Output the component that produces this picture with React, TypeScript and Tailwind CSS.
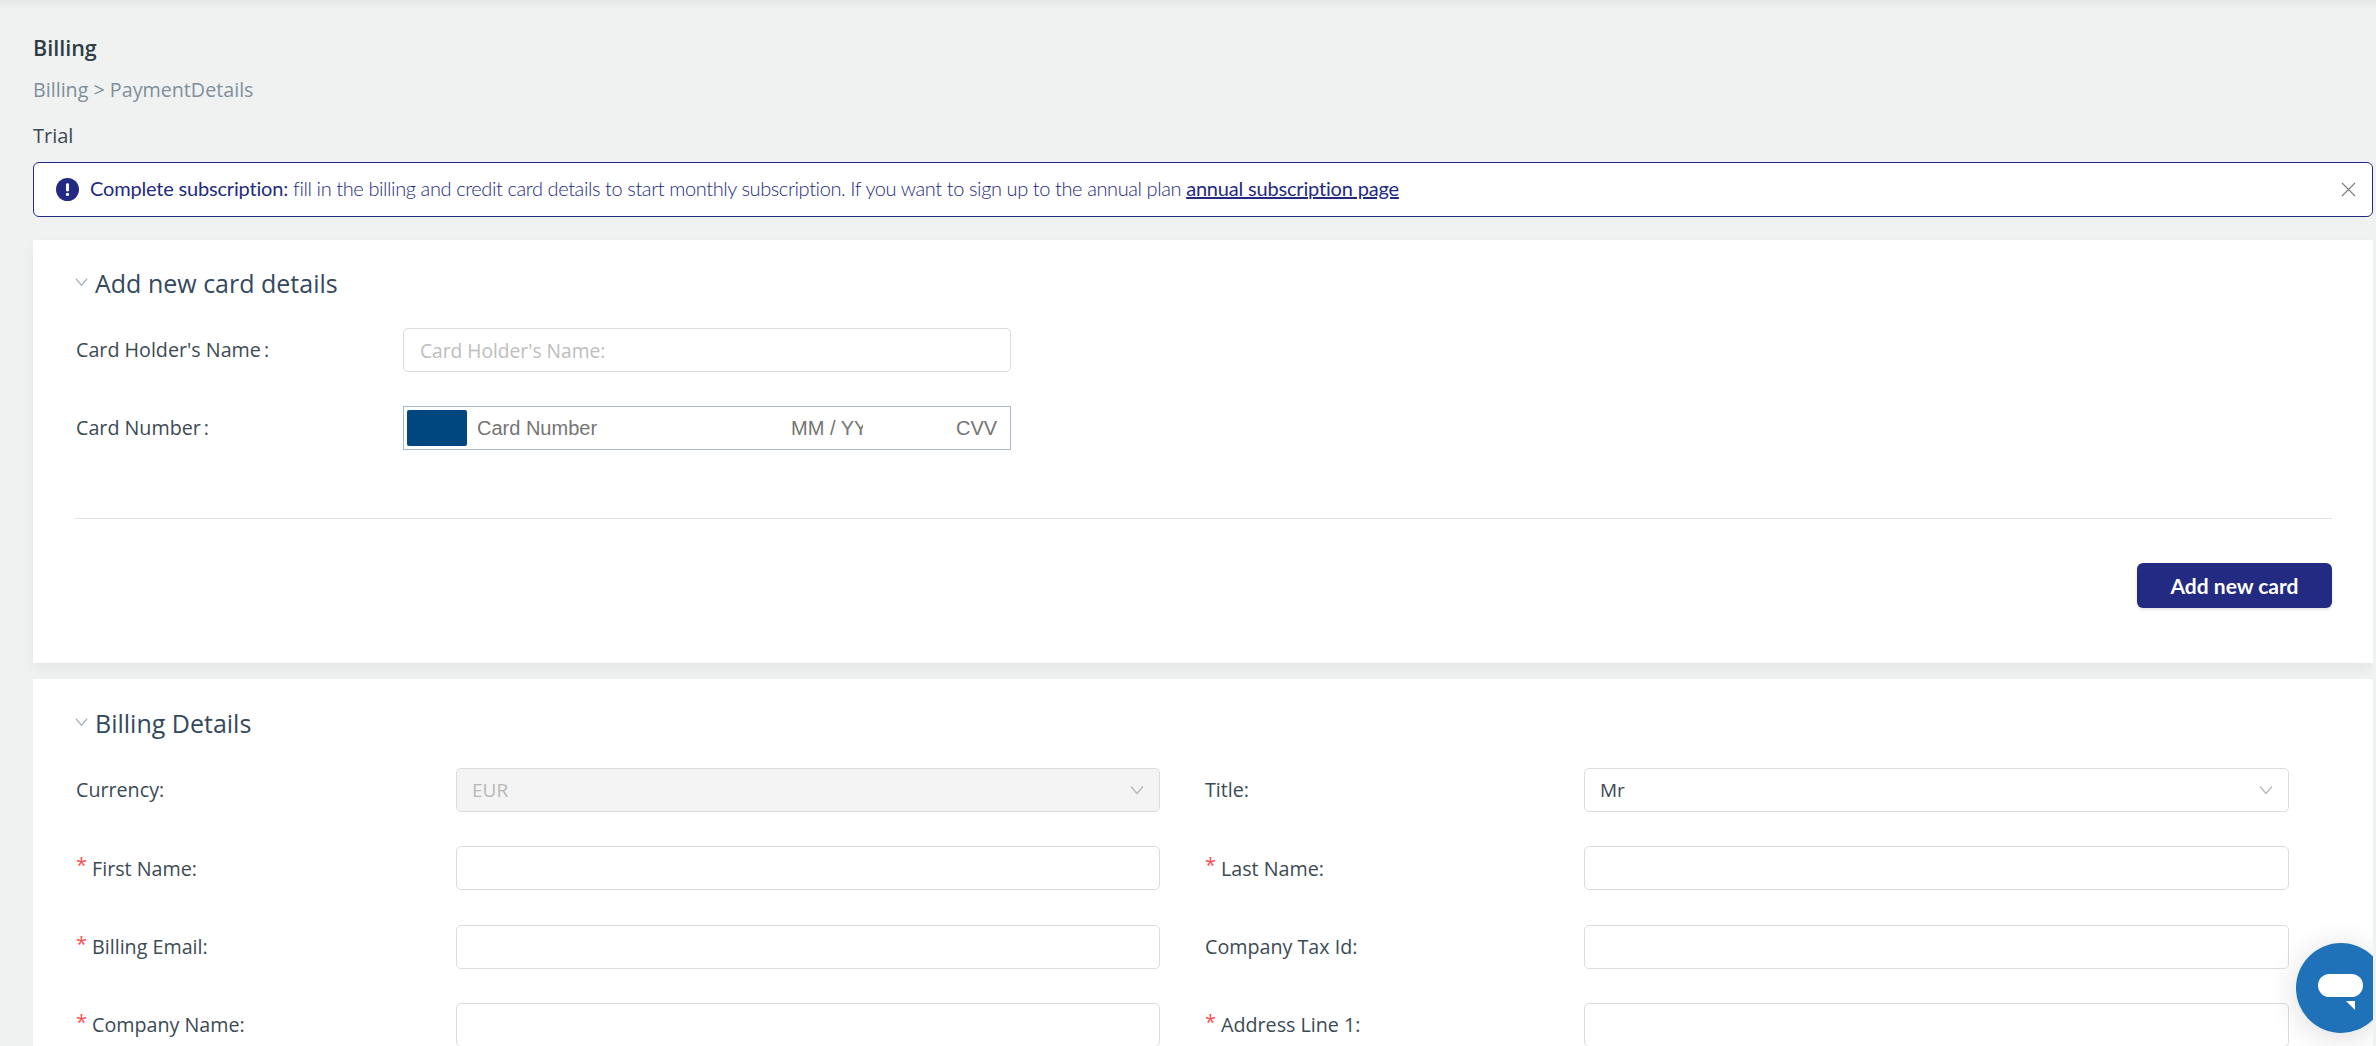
const OPEN = "font-['Open_Sans',sans-serif]";

function Chevron({ className }: { className: string }) {
  return (
    <svg viewBox="0 0 14 10" fill="none" stroke="currentColor" strokeWidth="1.3" className={className}>
      <path d="M1 1.5 L7 8.5 L13 1.5" />
    </svg>
  );
}

function SectionTitle({ title }: { title: string }) {
  return (
    <div className="flex h-8 items-center">
      <Chevron className="mb-[3px] h-[10px] w-[13px] text-[#a9b3bc]" />
      <h2 className="ml-[7px] text-[25px] font-normal leading-8 text-[#34495e]">{title}</h2>
    </div>
  );
}

function Field({ label, required, value, disabled, select, narrow }: {
  label: string;
  required?: boolean;
  value?: string;
  disabled?: boolean;
  select?: boolean;
  narrow?: boolean;
}) {
  return (
    <div className="flex h-11 items-center">
      <label className={`flex shrink-0 items-center pl-[1px] text-[19.7px] text-[#3c4a54] ${narrow ? "w-[380px]" : "w-[381px]"}`}>
        {required && <span className="mb-[6px] mr-[5px] text-[20px] leading-none text-[#ff4d4f]">*</span>}
        {label}
      </label>
      <div
        className={`flex h-11 flex-1 items-center justify-between rounded-[5px] border-[1.5px] border-[#dcdcdc] px-[15px] text-[19px] ${
          disabled ? "bg-[#f4f4f4] text-[#b8b8b8]" : "bg-white text-[#3c4a54]"
        }`}
      >
        <span>{value}</span>
        {select && <Chevron className="h-[10px] w-[14px] text-[#b8b8b8]" />}
      </div>
    </div>
  );
}

export default function App() {
  return (
    <div className={`relative h-[1046px] w-[2376px] overflow-hidden bg-[#f0f2f2] ${OPEN}`}>
      <div className="absolute inset-x-0 top-0 h-[10px] bg-gradient-to-b from-[#e6e8e8] to-[#f0f2f2]" />
      <div className="relative h-[1046px] w-[2373px] overflow-hidden pl-[33px] pt-8">
        <h1 className="h-8 text-[21.5px] font-semibold leading-8 text-[#2f3d45]">Billing</h1>
        <div className="mt-[10px] h-8 text-[19.7px] leading-8 text-[#7f8f9b]">Billing &gt; PaymentDetails</div>
        <div className="mt-[14px] h-8 text-[20px] leading-8 text-[#3c4a54]">Trial</div>

        {/* Alert */}
        <div className="mt-[10px] flex h-[55px] items-center rounded-[6px] border-[1.5px] border-[#232a81] bg-white pl-[22px] pr-[16px] font-['Lato',sans-serif] text-[20px] text-[#232a81]">
          <svg viewBox="0 0 24 24" className="h-[23px] w-[23px] shrink-0">
            <circle cx="12" cy="12" r="12" fill="#232a81" />
            <rect x="10.4" y="5.5" width="3.2" height="8.5" rx="1.4" fill="#fff" />
            <circle cx="12" cy="17.2" r="1.7" fill="#fff" />
          </svg>
          <p className="mb-[3px] ml-[11px] flex-1 whitespace-pre font-light tracking-[-0.4px]">
            <span className="font-normal tracking-[-0.18px]">Complete subscription:</span> fill in the billing and credit card details to start monthly subscription. If you want to sign up to the annual plan{" "}
            <a className="font-normal tracking-[-0.18px] underline">annual subscription page</a>
          </p>
          <svg viewBox="0 0 16 16" fill="none" stroke="#757575" strokeWidth="1.3" className="h-[15px] w-[15px]">
            <path d="M1 1 L15 15 M15 1 L1 15" />
          </svg>
        </div>

        {/* Add new card */}
        <section className="mt-[23px] h-[423px] bg-white pl-[42px] pr-[41px] pt-[27px] shadow-[0_6px_14px_rgba(0,0,0,0.05)]">
          <SectionTitle title="Add new card details" />
          <div className="mt-[29px] flex h-11 items-center">
            <label className="w-[328px] shrink-0 pl-[1px] text-[19.7px] text-[#3c4a54]">Card Holder's Name<span className="ml-[3px]">:</span></label>
            <input
              placeholder="Card Holder's Name:"
              className="h-11 w-[608px] rounded-[5px] border-[1.5px] border-[#dcdcdc] bg-white px-[16px] text-[19.2px] outline-none placeholder:text-[#bdbdbd]"
            />
          </div>
          <div className="mt-[34px] flex h-11 items-center">
            <label className="w-[328px] shrink-0 pl-[1px] text-[19.7px] text-[#3c4a54]">Card Number<span className="ml-[3px]">:</span></label>
            <div className="flex h-11 w-[608px] items-center border-[1.5px] border-[#aab7c4] bg-white pl-[3px] font-['Liberation_Sans',sans-serif] text-[20px] text-[#757575]">
              <div className="h-9 w-[60px] rounded-[2px] bg-[#00467f]" />
              <span className="ml-[10px] w-[314px]">Card Number</span>
              <span className="w-[72px] overflow-hidden whitespace-nowrap">MM / YY</span>
              <span className="ml-[93px]">CVV</span>
            </div>
          </div>
          <div className="mt-[68px] border-t-[1.5px] border-[#dde3ea]" />
          <div className="mt-11 flex justify-end">
            <button className="h-[45px] w-[195px] rounded-[6px] bg-[#232a81] font-['Lato',sans-serif] text-[21px] font-bold text-white shadow-[0_2px_3px_rgba(0,0,0,0.1)]">
              Add new card
            </button>
          </div>
        </section>

        {/* Billing details */}
        <section className="mt-[16px] bg-white pb-10 pl-[42px] pr-[84px] pt-7">
          <SectionTitle title="Billing Details" />
          <div className="mt-[29px] grid grid-cols-[1085px_1fr] gap-x-[44px] gap-y-[34.4px]">
            <Field label="Currency:" value="EUR" disabled select />
            <Field label="Title:" value="Mr" select narrow />
            <Field label="First Name:" required />
            <Field label="Last Name:" required narrow />
            <Field label="Billing Email:" required />
            <Field label="Company Tax Id:" narrow />
            <Field label="Company Name:" required />
            <Field label="Address Line 1:" required narrow />
          </div>
        </section>

        {/* Chat launcher */}
        <div className="absolute left-[2296px] top-[943px] flex h-[90px] w-[90px] items-center justify-center rounded-full bg-[#1f72b8] shadow-[0_4px_30px_rgba(0,0,0,0.14)]">
          <svg viewBox="0 0 90 90" className="h-[90px] w-[90px]">
            <rect x="22" y="31" width="45" height="23" rx="11.5" fill="#fff" />
            <path d="M50 58 H59 V67 Z" fill="#fff" />
          </svg>
        </div>
      </div>
    </div>
  );
}
